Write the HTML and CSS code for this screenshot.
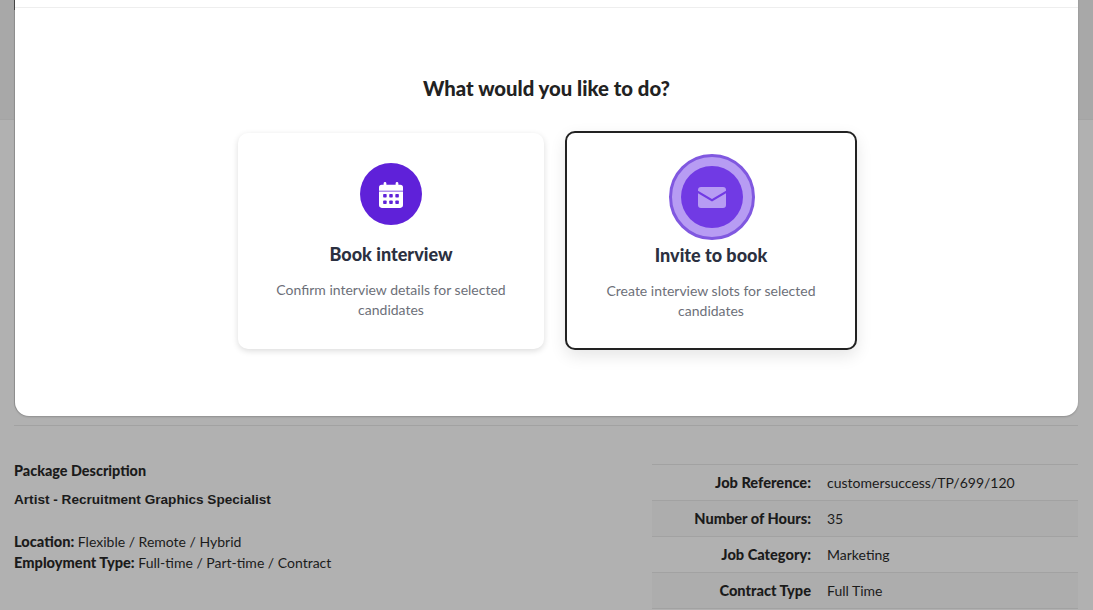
FILE: index.html
```html
<!DOCTYPE html>
<html lang="en">
<head>
    <meta charset="UTF-8">
    <meta name="viewport" content="width=device-width, initial-scale=1.0">
    <title>Book interview</title>
    <link rel="stylesheet" href="styles.css">
</head>
<body>

<div class="page">
    <div class="page-header"></div>
    <div class="page-body">
        <div class="details">
            <div class="package">
                <h4>Package Description</h4>
                <h3>Artist - Recruitment Graphics Specialist</h3>
                <p><b>Location:</b> Flexible / Remote / Hybrid</p>
                <p><b>Employment Type:</b> Full-time / Part-time / Contract</p>
            </div>
            <table class="job-table">
                <tr>
                    <th>Job Reference:</th>
                    <td>customersuccess/TP/699/120</td>
                </tr>
                <tr>
                    <th>Number of Hours:</th>
                    <td>35</td>
                </tr>
                <tr>
                    <th>Job Category:</th>
                    <td>Marketing</td>
                </tr>
                <tr>
                    <th>Contract Type</th>
                    <td>Full Time</td>
                </tr>
            </table>
        </div>
    </div>
</div>

<div class="modal">
    <div class="modal-top"></div>
    <h2>What would you like to do?</h2>
    <div class="choices">
        <div class="card card-book">
            <div class="icon-circle">
                <svg width="24" height="27" viewBox="0 0 26 29">
                    <path fill="#fff" d="M5 2.500a1.500 1.500 0 0 1 3 0V4h10V2.500a1.500 1.500 0 0 1 3 0V4h2a3 3 0 0 1 3 3v3.500H0V7a3 3 0 0 1 3-3h2zM0 11.300h26V26a3 3 0 0 1-3 3H3a3 3 0 0 1-3-3z"/>
                    <g fill="#5f21d9">
                        <rect x="4.500" y="14" width="3.800" height="3.800" rx=".8"/>
                        <rect x="11.100" y="14" width="3.800" height="3.800" rx=".8"/>
                        <rect x="17.700" y="14" width="3.800" height="3.800" rx=".8"/>
                        <rect x="4.500" y="21" width="3.800" height="3.800" rx=".8"/>
                        <rect x="11.100" y="21" width="3.800" height="3.800" rx=".8"/>
                        <rect x="17.700" y="21" width="3.800" height="3.800" rx=".8"/>
                    </g>
                </svg>
            </div>
            <h3>Book interview</h3>
            <p>Confirm interview details for selected candidates</p>
        </div>
        <div class="card card-invite">
            <div class="icon-ring">
                <div class="icon-circle">
                    <svg width="28" height="21" viewBox="0 0 28 21">
                        <path fill="#b79cf3" d="M3 0h22a3 3 0 0 1 3 3v.8L14 12 0 3.800V3a3 3 0 0 1 3-3zM0 6.300l14 8.200 14-8.200V18a3 3 0 0 1-3 3H3a3 3 0 0 1-3-3z"/>
                    </svg>
                </div>
            </div>
            <h3>Invite to book</h3>
            <p>Create interview slots for selected candidates</p>
        </div>
    </div>
</div>

</body>
</html>
```

FILE: styles.css
```css
html, body {
    margin: 0;
    height: 100%;
    overflow: hidden;
}
body {
    font-family: Lato, "Noto Sans", sans-serif;
    background: #b1b1b1;
    color: #1b1b1b;
}
.page-header {
    height: 120px;
    background: #a8a8a8;
    border-bottom: 1px solid #a4a4a4;
    box-sizing: border-box;
}
.page-body {
    padding: 305px 15px 0 14px;
}
.details {
    display: flex;
    justify-content: space-between;
    align-items: flex-start;
    border-top: 1px solid #a2a2a2;
    padding-top: 36px;
}
.package h4 {
    margin: 0 0 10px;
    font-size: 14.4px;
    line-height: 18px;
    font-weight: 900;
}
.package h3 {
    margin: 0 0 21px;
    font-family: "Liberation Sans", Arial, sans-serif;
    font-size: 13.6px;
    line-height: 20px;
    font-weight: 700;
}
.package p {
    margin: 0;
    font-size: 14px;
    line-height: 21px;
}
.package b, .job-table th {
    font-size: 14.6px;
    font-weight: 900;
}
.job-table {
    width: 426px;
    margin-top: 2px;
    border-collapse: collapse;
    font-size: 14px;
    border-top: 1px solid #a2a2a2;
}
.job-table th, .job-table td {
    box-sizing: border-box;
    height: 36px;
    padding: 0 0 1px;
    border-bottom: 1px solid #a2a2a2;
}
.job-table tr:nth-child(even) {
    background: #adadad;
}
.job-table th {
    width: 159px;
    text-align: right;
}
.job-table td {
    padding-left: 16px;
}
.modal {
    position: absolute;
    left: 15px;
    top: -10px;
    width: 1063px;
    height: 426px;
    background: #fff;
    border-radius: 0 0 14px 14px;
    box-shadow: -1px 0 0 #8e8e8e, 0 1px 2px rgba(0, 0, 0, 0.2);
}
.modal::before {
    content: "";
    position: absolute;
    left: -1px;
    top: 10px;
    width: 1px;
    height: 10px;
    background: #444;
}
.modal-top {
    height: 17px;
    border-bottom: 1px solid #eee;
}
.modal h2 {
    margin: 0;
    padding-top: 66px;
    text-align: center;
    font-size: 20.3px;
    line-height: 28px;
    font-weight: 900;
    color: #222;
}
.choices {
    display: flex;
    justify-content: center;
    align-items: flex-start;
    gap: 21px;
    margin-top: 29px;
    margin-left: 2px;
}
.card {
    box-sizing: border-box;
    background: #fff;
    border-radius: 10px;
    text-align: center;
    display: flex;
    flex-direction: column;
    align-items: center;
}
.card-book {
    width: 306px;
    height: 216px;
    margin-top: 2px;
    padding-top: 30px;
    box-shadow: 0 2px 6px rgba(0, 0, 0, 0.14);
}
.card-invite {
    width: 292px;
    height: 219px;
    padding-top: 21px;
    border: 2px solid #222;
    box-shadow: 0 6px 16px rgba(0, 0, 0, 0.1);
}
.icon-circle {
    width: 62px;
    height: 62px;
    border-radius: 50%;
    background: #5f21d9;
    display: flex;
    align-items: center;
    justify-content: center;
}
.icon-ring {
    box-sizing: border-box;
    width: 86px;
    height: 86px;
    margin-left: 1px;
    border-radius: 50%;
    background: #b79cf3;
    border: 3px solid #8058e0;
    display: flex;
    align-items: center;
    justify-content: center;
}
.icon-ring .icon-circle {
    background: #713ae4;
}
.card h3 {
    margin: 16px 0 0;
    font-size: 18px;
    line-height: 26px;
    font-weight: 900;
    color: #2b3040;
}
.card-invite h3 {
    margin-top: 2px;
}
.card p {
    margin: 13px 0 0;
    width: 250px;
    font-size: 14px;
    line-height: 20px;
    color: #6d7079;
}
```
